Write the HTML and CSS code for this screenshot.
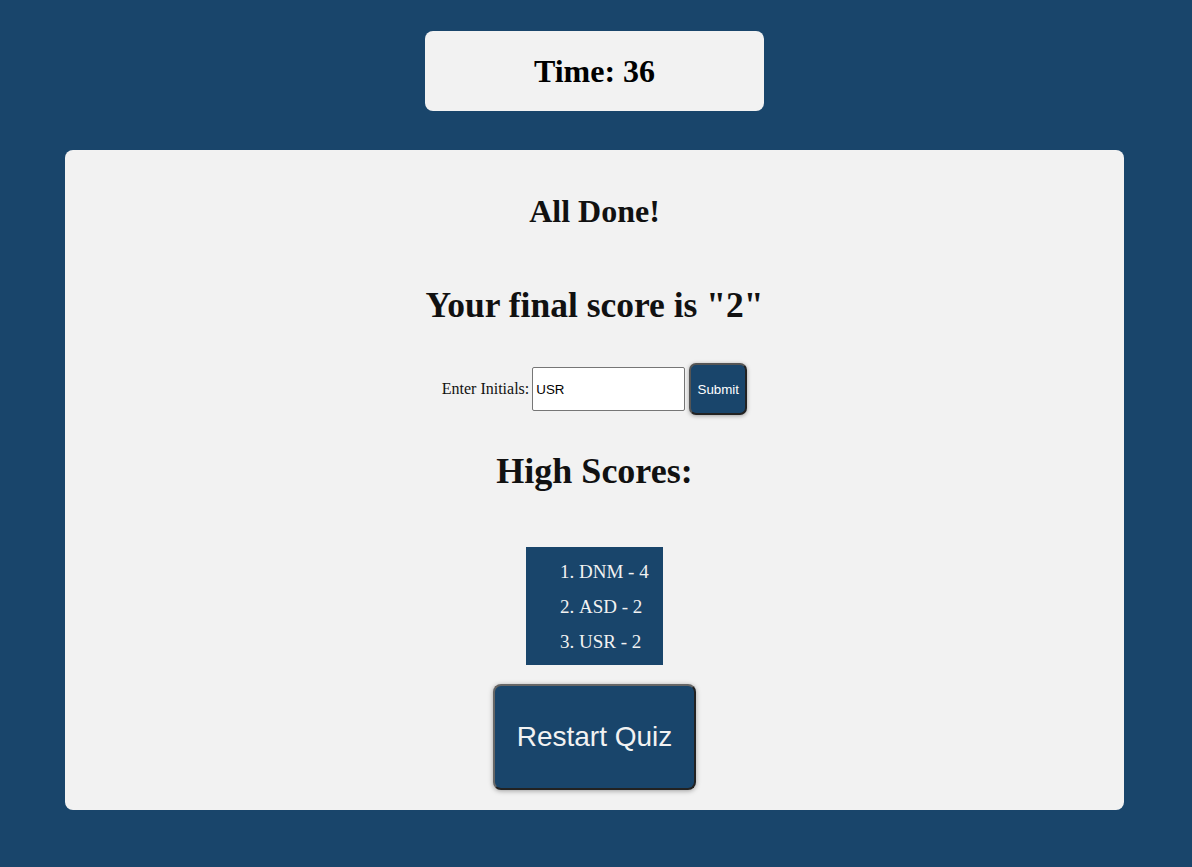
FILE: index.html
```html
<!DOCTYPE html>
<html>
<head>
<meta charset="utf-8">
<link rel="stylesheet" href="styles.css">
</head>
<body>
<div class="page">
  <header class="timer">Time: 36</header>
  <main class="card">
    <h2 class="done">All Done!</h2>
    <h1 class="score">Your final score is "2"</h1>
    <form class="initials">
      <label class="initials-label" for="init">Enter Initials:</label>
      <input id="init" class="initials-input" type="text" value="USR">
      <button type="button" class="submit-btn">Submit</button>
    </form>
    <h1 class="hs-title">High Scores:</h1>
    <ol class="hs-list">
      <li>DNM - 4</li>
      <li>ASD - 2</li>
      <li>USR - 2</li>
    </ol>
    <button type="button" class="restart-btn">Restart Quiz</button>
  </main>
</div>
</body>
</html>
```

FILE: styles.css
```css
html, body {
  margin: 0;
  padding: 0;
  background: #19456b;
}
body {
  font-family: "Liberation Serif", "Times New Roman", serif;
  color: #111;
}
.page {
  display: flex;
  flex-direction: column;
  align-items: center;
  padding: 31px 3px 58px 0;
}
.timer {
  width: 339px;
  height: 80px;
  box-sizing: border-box;
  background: #f2f2f2;
  border-radius: 8px;
  display: flex;
  align-items: center;
  justify-content: center;
  font-weight: bold;
  font-size: 32px;
  color: #000;
}
.card {
  margin-top: 39px;
  width: 1059px;
  box-sizing: border-box;
  background: #f2f2f2;
  border-radius: 8px;
  display: flex;
  flex-direction: column;
  align-items: center;
  padding: 43px 0 20px;
}
.done {
  margin: 0;
  font-size: 32px;
  line-height: 37px;
  font-weight: bold;
}
.score {
  margin: 55px 0 0;
  font-size: 35.5px;
  line-height: 41px;
  font-weight: bold;
}
.initials {
  margin: 37px 0 0;
  display: flex;
  align-items: center;
  height: 52px;
}
.initials-label {
  font-size: 16px;
  margin-right: 3px;
}
.initials-input {
  width: 153px;
  height: 44px;
  box-sizing: border-box;
  border: 1px solid #767676;
  border-radius: 2px;
  background: #fff;
  padding: 0 3px;
  font-family: "Liberation Sans", Arial, sans-serif;
  font-size: 13.33px;
  color: #000;
  margin: 0 4px 0 0;
}
.submit-btn {
  width: 58px;
  height: 52px;
  box-sizing: border-box;
  background: #19456b;
  color: #fff;
  border: 2px solid #2a2a2a;
  border-color: #555 #222 #222 #555;
  border-radius: 7px;
  box-shadow: 0 1px 4px rgba(0,0,0,0.35);
  font-family: "Liberation Sans", Arial, sans-serif;
  font-size: 13.33px;
  padding: 0;
}
.hs-title {
  margin: 36px 0 0;
  font-size: 36px;
  line-height: 41px;
  font-weight: bold;
}
.hs-list {
  margin: 55px 0 0;
  width: 137px;
  height: 118px;
  box-sizing: border-box;
  background: #19456b;
  color: #f2f2f2;
  padding: 7px 0 0 53px;
  font-size: 19px;
}
.hs-list li {
  line-height: 35px;
}
.restart-btn {
  margin-top: 19px;
  width: 203px;
  height: 106px;
  box-sizing: border-box;
  background: #19456b;
  color: #f2f2f2;
  border: 2px solid #2a2a2a;
  border-color: #666 #222 #222 #666;
  border-radius: 8px;
  box-shadow: 0 1px 5px rgba(0,0,0,0.35);
  font-family: "Liberation Sans", Arial, sans-serif;
  font-size: 28px;
  padding: 0;
}
```
